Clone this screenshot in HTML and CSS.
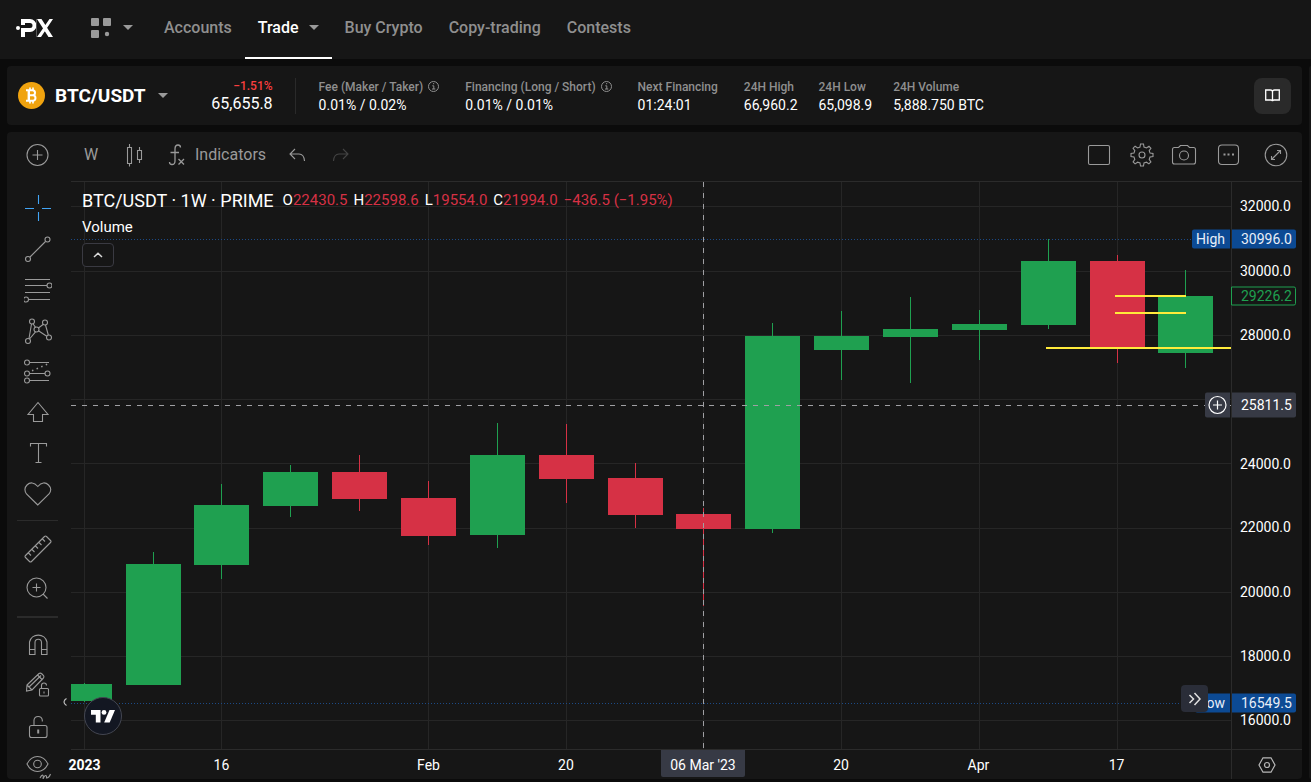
FILE: index.html
```html
<!DOCTYPE html>
<html lang="en">
<head>
<meta charset="utf-8">
<meta name="viewport" content="width=device-width, initial-scale=1">
<title>BTC/USDT</title>
<link rel="stylesheet" href="styles.css">
</head>
<body>
<header class="topbar">
  <a class="logo" href="#" aria-label="PX home">
    <svg width="38" height="20" viewBox="0 0 38 20"><circle cx="2" cy="10" r="2" fill="#fff"/><g fill="none" stroke="#fff" stroke-width="4"><path d="M5 3H14A4.500 4.500 0 0 1 14 12H8"/><path d="M7 10V19"/><path d="M7 3V7"/></g><path d="M21 1H25.500L37 19H32.500ZM33.500 1H37L25 19H21Z" fill="#fff"/><path d="M20.500 1V19" stroke="#555" stroke-width="1"/></svg>
  </a>
  <button class="apps" type="button" aria-label="Products">
    <svg width="20" height="20" viewBox="0 0 20 20" fill="#9a9a9a"><rect width="8" height="8" rx="1"/><rect x="12" width="8" height="8" rx="1"/><rect y="12" width="8" height="8" rx="1"/><circle cx="16" cy="16" r="2.2"/></svg>
    <span class="caret"></span>
  </button>
  <nav class="nav">
    <a class="nav-link" href="#">Accounts</a>
    <a class="nav-link nav-link-active" href="#">Trade <span class="caret"></span></a>
    <a class="nav-link" href="#">Buy Crypto</a>
    <a class="nav-link" href="#">Copy-trading</a>
    <a class="nav-link" href="#">Contests</a>
  </nav>
</header>

<div class="workspace">
<main class="content">
  <section class="ticker">
    <button class="pair" type="button">
      <svg width="27" height="27" viewBox="0 0 27 27"><circle cx="13.500" cy="13.500" r="13.500" fill="#f0a30f"/><g fill="none" stroke="#fff"><path d="M8 8.300H14.500A2.500 2.500 0 0 1 14.500 13.300H10.500M10.500 13.300H15.200A2.800 2.800 0 0 1 15.200 18.800H8" stroke-width="2"/><path d="M10.800 8V19" stroke-width="2.400"/><path d="M12 5.500V8M15 5.500V8M12 19V21.500M15 19V21.500" stroke-width="1.600"/></g></svg>
      <span class="pair-name">BTC/USDT</span>
      <span class="caret"></span>
    </button>
    <div class="quote"><span class="quote-change">−1.51%</span><span class="quote-price">65,655.8</span></div>
    <dl class="stats">
      <div class="stat stat-wide"><dt>Fee (Maker / Taker) <svg class="info" width="11" height="11" viewBox="0 0 11 11"><circle cx="5.500" cy="5.500" r="5"/><path d="M4.300 4.800H5.800V8M4 8H7.300M5 2.700H6.200"/></svg></dt><dd>0.01% / 0.02%</dd></div>
      <div class="stat stat-wide"><dt>Financing (Long / Short) <svg class="info" width="11" height="11" viewBox="0 0 11 11"><circle cx="5.500" cy="5.500" r="5"/><path d="M4.300 4.800H5.800V8M4 8H7.300M5 2.700H6.200"/></svg></dt><dd>0.01% / 0.01%</dd></div>
      <div class="stat stat-wide"><dt>Next Financing</dt><dd>01:24:01</dd></div>
      <div class="stat"><dt>24H High</dt><dd>66,960.2</dd></div>
      <div class="stat"><dt>24H Low</dt><dd>65,098.9</dd></div>
      <div class="stat"><dt>24H Volume</dt><dd>5,888.750 BTC</dd></div>
    </dl>
    <button class="guide" type="button" aria-label="Guide">
      <svg width="15" height="13" viewBox="0 0 15 13" fill="none" stroke="#fff" stroke-width="1.300"><path d="M.7 1H5.500Q7.500 1 7.500 3Q7.500 1 9.500 1H14.300V11H9Q7.500 11 7.500 12.300Q7.500 11 6 11H.7ZM7.500 3V12"/></svg>
    </button>
  </section>

  <section class="terminal">
    <aside class="sidebar">
      <button class="tool tool-add" type="button" aria-label="Add symbol"><svg class="icon" viewBox="0 0 28 28"><circle cx="13.500" cy="14" r="10.500"/><path d="M13.500 9V19M8.500 14H18.500"/></svg></button>
      <div class="tools">
        <button class="tool tool-on" type="button" aria-label="Cross"><svg class="icon" viewBox="0 0 28 28"><path d="M1 14.500H10M18 14.500H27M14.500 1V10M14.500 18V27"/></svg></button>
        <button class="tool" type="button" aria-label="Trend line"><svg class="icon" viewBox="0 0 28 28"><circle cx="4" cy="24" r="2.500"/><circle cx="23.500" cy="4.500" r="2.500"/><path d="M6 22L21.500 6.500"/></svg></button>
        <button class="tool" type="button" aria-label="Fibonacci"><svg class="icon" viewBox="0 0 28 28"><path d="M1 3.500H26M1 9.500H23M1 16.500H26M4.500 23.500H26"/><circle cx="25.500" cy="9.500" r="2.500"/><circle cx="2" cy="23.500" r="2.500"/></svg></button>
        <button class="tool" type="button" aria-label="Patterns"><svg class="icon" viewBox="0 0 28 28"><circle cx="8" cy="4.500" r="2.500"/><circle cx="21" cy="5.500" r="2.500"/><circle cx="12.500" cy="12.500" r="2.500"/><circle cx="4" cy="24" r="2.500"/><circle cx="25" cy="20.500" r="2.500"/><path d="M7.500 7L5 21.500M9 6.700L11.500 10.400M11.500 14.800L5.500 22M14.400 11L19.400 7.200M14.400 13.800L22.800 19.300M21.500 8L24.300 18"/></svg></button>
        <button class="tool" type="button" aria-label="Forecast"><svg class="icon" viewBox="0 0 28 28"><path d="M5 4.500H25M5 15.500H21M5 22.500H25"/><circle cx="3" cy="4.500" r="2.500"/><circle cx="3" cy="15.500" r="2.500"/><circle cx="23.500" cy="15.500" r="2.500"/><circle cx="3" cy="22.500" r="2.500"/><path d="M8 12.800L25 5.500" stroke-width="1.500" stroke-dasharray="1.500 3.500"/></svg></button>
        <button class="tool" type="button" aria-label="Arrow"><svg class="icon" viewBox="0 0 28 28"><path d="M14 3.500L4 15.500H9.500V22.500H18.500V15.500H24Z"/></svg></button>
        <button class="tool" type="button" aria-label="Text"><svg class="icon" viewBox="0 0 28 28"><path d="M6.500 6.500V3.500H22.500V6.500M14.500 3.500V22.500M11.500 22.500H17.500"/></svg></button>
        <button class="tool" type="button" aria-label="Icons"><svg class="icon" viewBox="0 0 28 28"><path d="M13.800 24L2.500 13C.5 10 .5 6.500 3 4C6 1 10 1 13.800 5.500C17.500 1 21.500 1 24.500 4C27 6.500 27.300 10 25 13Z"/></svg></button>
        <hr class="tool-rule">
        <button class="tool" type="button" aria-label="Measure"><svg class="icon" viewBox="0 0 28 28"><path d="M1.500 20.500Q.5 21.500 1.500 22.500L5.500 26.500Q6.500 27.500 7.500 26.500L26.500 7.500Q27.500 6.500 26.500 5.500L22.500 1.500Q21.500 .5 20.500 1.500ZM4.500 18L7 20.500M8 14.500L10.500 17M11.500 11L14 13.500M15 7.500L17.500 10M18.500 4L21 6.500"/></svg></button>
        <button class="tool" type="button" aria-label="Zoom in"><svg class="icon" viewBox="0 0 28 28"><circle cx="12.500" cy="11.500" r="9.500"/><path d="M12.500 7.500V15.500M8.500 11.500H16.500M19 18L23.500 22.500"/></svg></button>
        <hr class="tool-rule tool-rule-thick">
        <button class="tool" type="button" aria-label="Magnet"><svg class="icon" viewBox="0 0 28 28"><path d="M5.500 23.500V11A9 9 0 0 1 23 11V23.500H17.500V11.500A3.200 3.200 0 0 0 11 11.500V23.500ZM5.500 18.500H11M17.500 18.500H23"/></svg></button>
        <button class="tool" type="button" aria-label="Lock drawing mode"><svg class="icon" viewBox="0 0 28 28"><path d="M3 13L15 1.500Q16.500 .5 18 2L19.500 3.500Q20.500 5 19 6.500L8 18L2.500 19ZM3 13L8 18M5 15L17 3.500M13.500 3L18.500 8"/><rect x="15.500" y="16.500" width="9" height="7.500" rx="1"/><path d="M17.500 16.500V13.500A2.500 2.500 0 0 1 22.500 13.500M20 19.500V21.500"/></svg></button>
        <button class="tool" type="button" aria-label="Lock all drawings"><svg class="icon" viewBox="0 0 28 28"><rect x="5.500" y="12.500" width="17.500" height="12" rx="2"/><path d="M10 12.500V7A4.200 4.200 0 0 1 18.300 7V8.500"/><path d="M14.200 16.500V20.500" stroke-width="2"/></svg></button>
        <button class="tool" type="button" aria-label="Hide drawings"><svg class="icon" viewBox="0 0 28 28"><path d="M3 10C8 0 19 0 24 10C19 20 8 20 3 10Z"/><circle cx="13.500" cy="10" r="3.800"/><path d="M16 24C18 20 20 20 19 25C21 20 23 21 22.500 24Q25 24 26.500 20"/></svg></button>
      </div>
    </aside>

    <div class="chart">
      <div class="toolbar">
        <button class="bar-btn bar-interval" type="button">W</button>
        <button class="bar-btn" type="button" aria-label="Candles"><svg class="icon" viewBox="0 0 28 28"><path d="M7.500 6.500H11.500V22.500H7.500ZM9.500 3V6.500M9.500 22.500V25.500M17.500 9.500H21.500V18.500H17.500ZM19.500 6V9.500M19.500 18.500V22"/></svg></button>
        <button class="bar-btn bar-indicators" type="button"><svg class="icon" viewBox="0 0 28 28"><path d="M17.500 6.500Q17.500 4 15 4Q12 4 12 8V20Q12 23.500 9 23.500Q6.500 23.500 6.500 21M7.500 11.500H16M15.500 18L21 23.500M21 18L15.500 23.500" stroke-width="1.300"/></svg>Indicators</button>
        <button class="bar-btn" type="button" aria-label="Undo"><svg class="icon" viewBox="0 0 28 28"><path d="M11 8L6 13L11 18M6 13H15Q20 13 20.500 20"/></svg></button>
        <button class="bar-btn bar-disabled" type="button" aria-label="Redo" disabled><svg class="icon" viewBox="0 0 28 28"><path d="M16 8L21 13L16 18M21 13H12Q7 13 6.500 20"/></svg></button>
        <div class="bar-right">
          <button class="bar-btn" type="button" aria-label="Layout"><svg class="icon" viewBox="0 0 28 28"><rect x="3.500" y="4.500" width="21" height="19" rx="1.500"/></svg></button>
          <button class="bar-btn" type="button" aria-label="Settings"><svg class="icon" viewBox="0 0 28 28"><circle cx="14" cy="14" r="3"/><path d="M12.500 3H15.500L16 6L18.500 7L21 5.300L22.900 7.200L21.200 9.700L22 12L25 12.500V15.500L22 16L21.200 18.400L22.900 20.900L20.900 22.900L18.500 21.200L16 22L15.500 25H12.500L12 22L9.600 21.200L7.100 22.900L5.100 20.900L6.800 18.400L6 16L3 15.500V12.500L6 12L6.800 9.700L5.100 7.200L7.100 5.200L9.600 6.900L12 6Z"/></svg></button>
          <button class="bar-btn" type="button" aria-label="Snapshot"><svg class="icon" viewBox="0 0 28 28"><path d="M3.500 6.500H7.500L9.500 4.500H16.500L18.500 6.500H22.500Q24.500 6.500 24.500 8.500V21Q24.500 23 22.500 23H3.500Q1.500 23 1.500 21V8.500Q1.500 6.500 3.500 6.500Z"/><circle cx="13" cy="14.500" r="4.500"/></svg></button>
          <button class="bar-btn" type="button" aria-label="More"><svg class="icon" viewBox="0 0 28 28"><rect x="4.500" y="4" width="20" height="19.500" rx="3.500"/><path d="M9.500 13.500H11.500M13.500 13.500H15.500M18 13.500H20" stroke-width="2"/></svg></button>
          <button class="bar-btn bar-last" type="button" aria-label="Fullscreen"><svg class="icon" viewBox="0 0 28 28"><circle cx="14" cy="14" r="10.800"/><path d="M15 9.500H18.500V13M18 10L10 18M9.500 15V18.500H13"/></svg></button>
        </div>
      </div>

      <div class="plot">
        <svg class="plot-canvas" viewBox="71 182 1160 567" preserveAspectRatio="none">
          <path class="grid" d="M71 206.500H1231M71 271.500H1231M71 335.500H1231M71 399.500H1231M71 463.500H1231M71 528.500H1231M71 592.500H1231M71 656.500H1231M71 720.500H1231M84.500 182V749M221.500 182V749M428.500 182V749M566.500 182V749M703.500 182V749M841.500 182V749M979.500 182V749M1117.500 182V749"/>
          <path class="extreme" d="M71 239.500H1231M71 703.500H1231"/>
          <g class="up">
            <path class="wick" d="M84.500 683V702M153.500 552V564M221.500 484V579M290.500 465V517M497.500 423V548M772.500 323V533M841.500 311V380M910.500 297V383M979.500 310V360M1048.500 239V329M1185.500 270V368"/>
            <path class="body" d="M71 684H112V701H71ZM126 564H181V685H126ZM194 505H249V565H194ZM263 472H318V506H263ZM470 455H525V535H470ZM745 336H800V529H745ZM814 336H869V350H814ZM883 329H938V337H883ZM952 324H1007V330H952ZM1021 261H1076V325H1021ZM1158 296H1213V353H1158Z"/>
          </g>
          <g class="down">
            <path class="wick" d="M359.500 455V511M428.500 481V545M566.500 424V503M635.500 463V528M703.500 508V606M1117.500 255V363"/>
            <path class="body" d="M332 472H387V499H332ZM401 498H456V536H401ZM539 455H594V479H539ZM608 478H663V515H608ZM676 514H731V529H676ZM1090 261H1145V348H1090Z"/>
          </g>
          <path class="trend" d="M1115 296H1186M1115 313H1186M1046 348H1231"/>
          <path class="crosshair" d="M71 405.500H1231M703.500 182V749"/>
        </svg>

        <div class="legend">
          <div class="legend-main">
            <h1 class="legend-title">BTC/USDT · 1W · PRIME</h1>
            <span>O<b>22430.5</b></span><span>H<b>22598.6</b></span><span>L<b>19554.0</b></span><span>C<b>21994.0</b></span><span><b>−436.5 (−1.95%)</b></span>
          </div>
          <div class="legend-study">Volume</div>
          <button class="legend-toggle" type="button" aria-label="Collapse"><svg width="10" height="6" viewBox="0 0 10 6"><path d="M1 5L5 1.300L9 5" fill="none" stroke="#d8d8d8" stroke-width="1.500"/></svg></button>
        </div>

        <span class="side-tag side-tag-blue" style="top:10.14%">High</span>
        <span class="side-tag side-tag-blue" style="top:91.9%">Low</span>
        <button class="side-tag side-tag-add" type="button" aria-label="Add order" style="top:39.33%"><svg width="19" height="19" viewBox="0 0 19 19" fill="none" stroke="#fff" stroke-width="1.200"><circle cx="9.500" cy="9.500" r="8.500"/><path d="M9.500 5V14M5 9.500H14"/></svg></button>
        <button class="jump" type="button" aria-label="Scroll to latest"><svg width="14" height="16" viewBox="0 0 14 16" fill="none" stroke="#e0e0e0" stroke-width="1.500"><path d="M1.500 4L5.500 8L1.500 12M6.500 2L12 8L6.500 14"/></svg></button>
        <a class="tv" href="#" aria-label="TradingView"><svg width="24" height="13" viewBox="0 0 24 13" fill="#fff"><path d="M0 0H9.500V12.500H4.800V4.700H0Z"/><circle cx="13" cy="2.400" r="2.400"/><path d="M18.500 0H24L18.700 12.500H13.200Z"/></svg></a>
        <button class="fold" type="button" aria-label="Hide tools"><svg width="4" height="8" viewBox="0 0 4 8" fill="none" stroke="#bbb" stroke-width="1.200"><path d="M3.500 .5Q1 2 1 4Q1 6 3.500 7.500"/></svg></button>
      </div>

      <div class="prices">
        <span class="price" style="top:4.32%">32000.0</span>
        <span class="price" style="top:15.7%">30000.0</span>
        <span class="price" style="top:26.98%">28000.0</span>
        <span class="price" style="top:49.65%">24000.0</span>
        <span class="price" style="top:60.93%">22000.0</span>
        <span class="price" style="top:72.3%">20000.0</span>
        <span class="price" style="top:83.6%">18000.0</span>
        <span class="price" style="top:94.9%">16000.0</span>
        <span class="price-tag price-tag-blue" style="top:10.14%">30996.0</span>
        <span class="price-tag price-tag-last" style="top:20.19%">29226.2</span>
        <span class="price-tag price-tag-cross" style="top:39.33%">25811.5</span>
        <span class="price-tag price-tag-blue" style="top:91.9%">16549.5</span>
      </div>

      <div class="times">
        <span class="time time-year" style="left:1.16%">2023</span>
        <span class="time" style="left:12.97%">16</span>
        <span class="time" style="left:30.82%">Feb</span>
        <span class="time" style="left:42.67%">20</span>
        <span class="time" style="left:66.38%">20</span>
        <span class="time" style="left:78.23%">Apr</span>
        <span class="time" style="left:90.13%">17</span>
        <span class="time-tag" style="left:54.48%">06 Mar '23</span>
      </div>
      <button class="axis-settings" type="button" aria-label="Axis settings"><svg width="18" height="16" viewBox="0 0 18 16" fill="none" stroke="#b8b8b8" stroke-width="1.200"><path d="M5 .8H13L17 8L13 15.200H5L1 8Z"/><circle cx="9" cy="8" r="2.500"/></svg></button>
    </div>
  </section>
</main>
<aside class="dock"></aside>
</div>
</body>
</html>
```
FILE: styles.css
```css
* { box-sizing: border-box; }

body {
  margin: 0;
  height: 100vh;
  display: flex;
  flex-direction: column;
  overflow: hidden;
  background: #0b0b0b;
  color: #fff;
  font-family: Roboto, "Liberation Sans", sans-serif;
  font-size: 14px;
}

button {
  margin: 0;
  padding: 0;
  border: 0;
  background: none;
  color: inherit;
  font: inherit;
  cursor: pointer;
}

a { color: inherit; text-decoration: none; }
svg { display: block; flex: none; }

.caret {
  flex: none;
  border: 5px solid transparent;
  border-top-color: #9a9a9a;
  border-bottom: 0;
}

/* Top navigation */
.topbar {
  flex: none;
  display: flex;
  align-items: center;
  height: 59px;
  padding: 0 16px;
  background: #161616;
}

.logo { margin: 0 37px 3px 0; }
.apps { display: flex; align-items: center; gap: 12px; margin: 0 18px 4px 0; }
.nav { display: flex; height: 100%; }

.nav-link {
  display: flex;
  align-items: center;
  gap: 10px;
  padding: 0 13px 4px;
  color: #8f8f8f;
  font-size: 16px;
  font-weight: 500;
  white-space: nowrap;
}

.nav-link-active {
  padding-top: 2px;
  color: #fff;
  border-bottom: 2px solid #fff;
}

/* Workspace */
.workspace {
  flex: 1;
  min-height: 0;
  display: flex;
  gap: 7px;
  padding: 7px 0 3px 7px;
}

.content {
  flex: 1;
  min-width: 0;
  display: flex;
  flex-direction: column;
  gap: 7px;
}

.dock { flex: none; width: 2px; background: #161616; border-radius: 4px 0 0 4px; }

/* Ticker */
.ticker {
  flex: none;
  display: flex;
  align-items: center;
  height: 59px;
  padding: 0 11px;
  background: #161616;
  border-radius: 4px;
}

.pair { display: flex; align-items: center; gap: 10px; }
.pair-name { font-size: 19px; font-weight: 700; }
.pair .caret { margin-left: 2px; }

.quote {
  display: flex;
  flex-direction: column;
  align-items: flex-end;
  width: 105px;
  white-space: nowrap;
}

.quote-change { color: #f93f3f; font-size: 12px; font-weight: 500; line-height: 16px; }
.quote-price { font-size: 16px; line-height: 20px; }

.stats {
  display: flex;
  gap: 21px;
  margin: 0 0 0 22px;
  padding-left: 23px;
  border-left: 1px solid #2a2a2a;
  white-space: nowrap;
}

.stat-wide { margin-right: 5px; }

.stat dt {
  display: flex;
  align-items: center;
  gap: 5px;
  color: #8f8f8f;
  font-size: 12px;
  font-weight: 500;
  line-height: 18px;
}

.stat dd { margin: 0; font-size: 14px; line-height: 18px; }
.info { fill: none; stroke: #8f8f8f; stroke-width: 1; }

.guide {
  display: grid;
  place-items: center;
  width: 37px;
  height: 36px;
  margin-left: auto;
  background: #2a2a2a;
  border-radius: 8px;
}

/* Terminal */
.terminal {
  flex: 1;
  min-height: 0;
  display: flex;
  background: #161616;
  border-radius: 4px;
  overflow: hidden;
}

.icon {
  width: 28px;
  height: 28px;
  fill: none;
  stroke: #9a9a9a;
  stroke-width: 1.1;
}

.sidebar {
  flex: none;
  display: flex;
  flex-direction: column;
  align-items: center;
  width: 64px;
  padding-right: 3px;
  min-height: 0;
}

.tools { display: flex; flex-direction: column; padding-top: 6px; }
.tool { flex: none; display: grid; place-items: center; width: 41px; height: 41px; }
.tool-add { height: 49px; padding-bottom: 4px; }
.tool-on .icon { stroke: #42a5f5; }

.tool-rule {
  flex: none;
  width: 41px;
  height: 1px;
  margin: 5px 0 7px;
  border: 0;
  background: #2b2b2b;
}

.tool-rule-thick { height: 2px; margin: 6px 0; }

.chart {
  flex: 1;
  min-width: 0;
  display: grid;
  grid-template-columns: minmax(0, 1fr) 71px;
  grid-template-rows: 50px minmax(0, 1fr) 30px;
}

.toolbar {
  grid-column: 1 / -1;
  display: flex;
  align-items: center;
  gap: 15px;
  padding: 0 12px 4px 13px;
  border-bottom: 1px solid #2b2b2b;
  color: #9a9a9a;
  font-size: 16px;
}

.bar-btn { display: flex; align-items: center; gap: 4px; }
.bar-interval { width: 21px; }
.bar-indicators { margin-right: 3px; }
.bar-disabled { opacity: .35; }
.bar-right { display: flex; gap: 15px; margin-left: auto; }
.bar-last { margin-left: 5px; }

.plot { position: relative; }
.plot-canvas { width: 100%; height: 100%; fill: none; }
.grid { stroke: #262626; }
.extreme { stroke: #1c4a86; stroke-dasharray: 1 2; }
.up .wick { stroke: #1fa050; }
.up .body { fill: #1fa050; }
.down .wick { stroke: #d63145; }
.down .body { fill: #d63145; }
.trend { stroke: #ffeb3b; stroke-width: 2; }
.crosshair { stroke: #a0a0a4; stroke-dasharray: 5 6; }

.legend {
  position: absolute;
  top: 6px;
  left: 11px;
  display: flex;
  flex-direction: column;
  align-items: flex-start;
  font-size: 15px;
  white-space: nowrap;
}

.legend-main {
  display: flex;
  align-items: center;
  gap: 6px;
  height: 24px;
}

.legend-title { margin: 0 3px 0 0; font-size: 18px; font-weight: 400; }
.legend-main b { color: #d63145; font-weight: 400; }
.legend-study { margin: 5px 0 6px; line-height: 20px; }

.legend-toggle {
  display: grid;
  place-items: center;
  width: 32px;
  height: 24px;
  border: 1px solid #3a3a42;
  border-radius: 4px;
  background: #161616;
}

.side-tag {
  position: absolute;
  right: 1px;
  height: 19px;
  padding: 0 5px 0 4px;
  border-radius: 2px 0 0 2px;
  line-height: 19px;
  transform: translateY(-50%);
}

.side-tag-blue { background: #0c4a94; color: #e8eef8; }
.side-tag-add { display: grid; place-items: center; width: 25px; height: 25px; padding: 0; background: #373a45; }

.jump {
  position: absolute;
  right: 23px;
  bottom: 37px;
  display: grid;
  place-items: center;
  width: 27px;
  height: 27px;
  border-radius: 4px;
  background: #2a2d38;
}

.tv {
  position: absolute;
  left: 13px;
  bottom: 14px;
  display: grid;
  place-items: center;
  width: 38px;
  height: 38px;
  border: 1px solid #434651;
  border-radius: 50%;
  background: #131722;
}

.fold { position: absolute; left: -8px; bottom: 43px; }

.prices { position: relative; border-left: 1px solid #2b2b2b; }
.price { position: absolute; left: 8px; line-height: 18px; transform: translateY(-50%); }

.price-tag {
  position: absolute;
  left: 0;
  width: 64px;
  padding-left: 9px;
  border-radius: 0 2px 2px 0;
  line-height: 19px;
  transform: translateY(-50%);
}

.price-tag-blue { background: #0c4a94; color: #e8eef8; }
.price-tag-last { left: -1px; width: 65px; border: 1px solid #1fa050; background: #161616; color: #1fa050; line-height: 17px; }
.price-tag-cross { background: #373a45; line-height: 25px; }

.times { position: relative; border-top: 1px solid #2b2b2b; }
.time { position: absolute; top: 6px; line-height: 18px; transform: translateX(-50%); }
.time-year { font-weight: 700; }

.time-tag {
  position: absolute;
  top: 0;
  width: 84px;
  height: 27px;
  border-radius: 0 0 2px 2px;
  background: #373a45;
  line-height: 30px;
  text-align: center;
  white-space: nowrap;
  transform: translateX(-50%);
}

.axis-settings {
  display: grid;
  place-items: center;
  border-top: 1px solid #2b2b2b;
  border-left: 1px solid #2b2b2b;
}
```
